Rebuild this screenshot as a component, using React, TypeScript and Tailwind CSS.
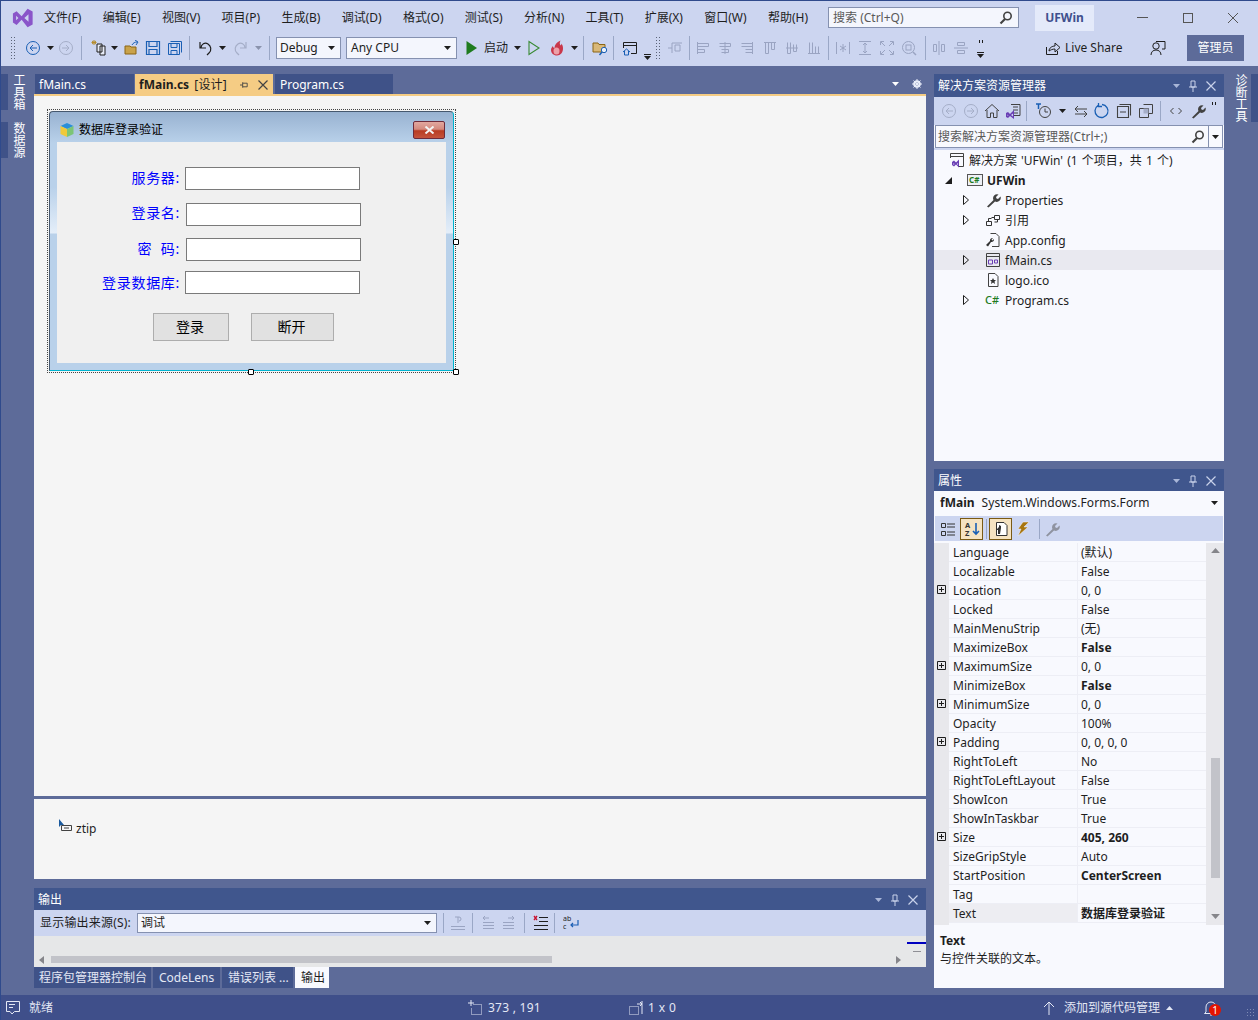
import type { ReactNode } from "react";

const MENUS = ["文件(F)", "编辑(E)", "视图(V)", "项目(P)", "生成(B)", "调试(D)", "格式(O)", "测试(S)", "分析(N)", "工具(T)", "扩展(X)", "窗口(W)", "帮助(H)"];

const PROPS = [
  { name: "Language", value: "(默认)" },
  { name: "Localizable", value: "False" },
  { name: "Location", value: "0, 0", plus: true },
  { name: "Locked", value: "False" },
  { name: "MainMenuStrip", value: "(无)" },
  { name: "MaximizeBox", value: "False", bold: true },
  { name: "MaximumSize", value: "0, 0", plus: true },
  { name: "MinimizeBox", value: "False", bold: true },
  { name: "MinimumSize", value: "0, 0", plus: true },
  { name: "Opacity", value: "100%" },
  { name: "Padding", value: "0, 0, 0, 0", plus: true },
  { name: "RightToLeft", value: "No" },
  { name: "RightToLeftLayout", value: "False" },
  { name: "ShowIcon", value: "True" },
  { name: "ShowInTaskbar", value: "True" },
  { name: "Size", value: "405, 260", bold: true, plus: true },
  { name: "SizeGripStyle", value: "Auto" },
  { name: "StartPosition", value: "CenterScreen", bold: true },
  { name: "Tag", value: "" },
  { name: "Text", value: "数据库登录验证", bold: true, selected: true },
];

const GRAY = "#9aa4c2";
const DARK = "#1e1e1e";
const BLUE = "#1a5fb4";

function Ico({ className = "", children }: { className?: string; children: ReactNode }) {
  return (
    <svg viewBox="0 0 16 16" fill="none" className={`w-4 h-4 shrink-0 ${className}`}>
      {children}
    </svg>
  );
}

function Caret({ className = "", color = DARK }: { className?: string; color?: string }) {
  return (
    <svg viewBox="0 0 7 4" className={`w-[7px] h-1 shrink-0 ${className}`}>
      <path d="M0 0h7L3.5 4z" fill={color} />
    </svg>
  );
}

function Sep({ className = "" }: { className?: string }) {
  return <div className={`w-px h-[24px] bg-[#9aa7c6] shrink-0 ${className}`} />;
}

function Grip({ className = "" }: { className?: string }) {
  return <div className={`h-[24px] shrink-0 bg-[radial-gradient(#5b6478_1px,transparent_1px)] bg-[length:3px_3px] ${className}`} />;
}

function NavIcon({ className = "", color, dir }: { className?: string; color: string; dir: "l" | "r" }) {
  return (
    <Ico className={className}>
      <circle cx="8" cy="8" r="6.5" stroke={color} />
      <path d={dir === "l" ? "M12 8H5M8 5 5 8l3 3" : "M4 8h7M8 5l3 3-3 3"} stroke={color} />
    </Ico>
  );
}

function Align({ className = "", d }: { className?: string; d: string }) {
  return (
    <Ico className={className}>
      <path d={d} stroke={GRAY} />
    </Ico>
  );
}

function Wrench({ className = "", color = DARK }: { className?: string; color?: string }) {
  return (
    <Ico className={className}>
      <path d="M2 14.500 8.500 8a4 4 0 0 1 5-5.500L11 5l.5 1.500L13 7l2.500-2.500A4 4 0 0 1 10 9.500L3.500 15.500z" fill={color} />
    </Ico>
  );
}

function Magnifier({ className = "" }: { className?: string }) {
  return (
    <svg viewBox="0 0 14 14" className={`w-[14px] h-[14px] shrink-0 ${className}`} fill="none">
      <circle cx="8.500" cy="5" r="3.700" stroke="#424242" strokeWidth="1.600" />
      <path d="M6 8 1.500 12.500" stroke="#424242" strokeWidth="2.200" />
    </svg>
  );
}

function PaneButtons() {
  return (
    <div className="flex items-center">
      <Caret color="#a9b6d8" />
      <svg viewBox="0 0 10 12" className="w-[10px] h-3 ml-[8px]" fill="none">
        <path d="M3 1h4v6H3zM1 7h8M5 7v5" stroke="#c9d2ea" />
      </svg>
      <svg viewBox="0 0 10 10" className="w-[10px] h-[10px] ml-[8px]" fill="none">
        <path d="M0.500 0.500l9 9M9.500 0.500l-9 9" stroke="#c9d2ea" strokeWidth="1.200" />
      </svg>
    </div>
  );
}

function TitleBar({ title, className = "" }: { title: string; className?: string }) {
  return (
    <div className={`flex items-center justify-between bg-[#40568d] text-white pl-1 pr-[8px] pt-px ${className}`}>
      <span>{title}</span>
      <PaneButtons />
    </div>
  );
}

function MainToolbar() {
  return (
    <div className="h-[27px] flex items-center pl-[9px] pr-[14px]">
      <Grip className="w-[6px]" />
      <NavIcon className="ml-[9px]" color={BLUE} dir="l" />
      <Caret className="ml-[6px]" />
      <NavIcon className="ml-1" color="#a5aec8" dir="r" />
      <Sep className="ml-[7px]" />
      <Ico className="ml-[9px]">
        <path d="M6 4h5v8H6z M9 6h5v9H9z" stroke={DARK} fill="#e8ecf7" />
        <path d="M3 0v5M0.500 2.500h5M1 1l4 3M5 1 1 4" stroke="#b58b2a" />
      </Ico>
      <Caret className="ml-1" />
      <Ico className="ml-[6px]">
        <path d="M1 6h5l1 1h5v7H1z" fill="#c9a24a" stroke="#8a6514" />
        <path d="M8 5c1-2 3-3 5-3M11 0l3 2-2 3" stroke="#1a5fb4" />
      </Ico>
      <Ico className="ml-[5px]">
        <path d="M1.500 1.500h13v13h-13zM4 1.500v5h8v-5M4 14.500v-5h8v5" stroke={BLUE} strokeWidth="1.200" />
      </Ico>
      <Ico className="ml-[6px]">
        <path d="M3.500 1.500h11v11M1.500 3.500h11v11h-11zM4 3.500v4h6v-4M4 14.500v-4h6v4" stroke={BLUE} />
      </Ico>
      <Sep className="ml-[6px]" />
      <Ico className="ml-[8px]">
        <path d="M3 8C3 4 7 2 10 4s4 6 1 9l-2 2M2 2v6h6" stroke={DARK} strokeWidth="1.200" />
      </Ico>
      <Caret className="ml-[5px]" />
      <Ico className="ml-[6px]">
        <path d="M13 8c0-4-4-6-7-4S2 10 5 13l2 2M14 2v6H8" stroke="#a5aec8" strokeWidth="1.200" />
      </Ico>
      <Caret className="ml-[7px]" color="#8a93ad" />
      <Sep className="ml-[7px]" />
      <div className="ml-[6px] w-[65px] h-[22px] bg-[#f4f6fd] border border-[#8591b0] flex items-center justify-between pl-[3px] pr-[5px] shrink-0">
        <span>Debug</span>
        <Caret />
      </div>
      <div className="ml-[5px] w-[111px] h-[22px] bg-[#f4f6fd] border border-[#8591b0] flex items-center justify-between pl-[4px] pr-[5px] shrink-0">
        <span>Any CPU</span>
        <Caret />
      </div>
      <Ico className="ml-[7px]">
        <path d="M2.500 1v14L13 8z" fill="#1e7b1e" />
      </Ico>
      <span className="ml-1 w-[25px] shrink-0">启动</span>
      <Caret className="ml-[5px]" />
      <Ico className="ml-[5px]">
        <path d="M3 1.500v13L13 8z" stroke="#388a34" strokeWidth="1.100" />
      </Ico>
      <Ico className="ml-[7px]">
        <path d="M8 15.500c-3.500 0-6-2.500-6-5.500 0-2 1-3 2-4 0 1 .5 2 1.500 2 0-3 2-6 6-7.500-1 2-1 3.500 0 5 .5-.5 1-1 1-2 1 1.500 1.500 3 1.500 5 0 4-2.500 7-6 7z" fill="#c9374a" />
        <ellipse cx="7.500" cy="11" rx="3" ry="3.500" fill="#eda0a8" />
      </Ico>
      <Caret className="ml-[6px]" />
      <Sep className="ml-[5px]" />
      <Ico className="ml-[8px]">
        <path d="M1 3h5l1 1.500h6V12H1z" fill="#d9b878" stroke="#8a6514" />
        <circle cx="12" cy="10" r="2.700" stroke={BLUE} fill="#e8f0fb" />
        <path d="M10 12l-2.500 3" stroke={BLUE} strokeWidth="1.400" />
      </Ico>
      <Sep className="ml-[5px]" />
      <Ico className="ml-[8px]">
        <path d="M1.500 8V2.500h13v11H9M1.500 5.500h13" stroke={DARK} />
        <path d="M1 12l3.500-3L8 12M2.500 11v4h4v-4" stroke={BLUE} />
      </Ico>
      <div className="ml-[6px] w-[7px] flex flex-col items-center self-end mb-[1px] shrink-0">
        <div className="w-[7px] h-px bg-[#1e1e1e] mb-px" />
        <Caret />
      </div>
      <Grip className="ml-1 w-[5px]" />
      <Align className="ml-[7px]" d="M1 8h4M5 3v10M5 3h10M8 5h5v6H8z" />
      <Sep className="ml-[6px]" />
      <Align className="ml-[5px]" d="M2.500 2v12M2.500 3.500h11v3h-11M2.500 9.500h7v3h-7" />
      <Align className="ml-[6px]" d="M8 2v12M2.500 3.500h11v3h-11M4.500 9.500h7v3h-7" />
      <Align className="ml-[6px]" d="M13.500 2v12M2.500 3.500h11v3h-11M6.500 9.500h7v3h-7" />
      <Align className="ml-[7px]" d="M2 2.500h12M3.500 2.500v11h3v-11M9.500 2.500v7h3v-7" />
      <Align className="ml-[6px]" d="M2 8h12M3.500 2.500v11h3v-11M9.500 4.500v7h3v-7" />
      <Align className="ml-[6px]" d="M2 13.500h12M3.500 2.500v11h3v-11M9.500 6.500v7h3v-7" />
      <Sep className="ml-[6px]" />
      <Align className="ml-[6px]" d="M1.500 2v12M14.500 2v12M8 4v8M5 6l6 4M11 6l-6 4" />
      <Align className="ml-[6px]" d="M2 1.500h12M2 14.500h12M8 3v10M6 5l2-2 2 2M6 11l2 2 2-2" />
      <Align className="ml-[6px]" d="M1.500 5V1.500H5M11 1.500h3.500V5M14.500 11v3.500H11M5 14.500H1.500V11M2 2l4 4M14 2l-4 4M14 14l-4-4M2 14l4-4" />
      <Ico className="ml-[6px]">
        <circle cx="7.500" cy="7.500" r="6" stroke={GRAY} />
        <rect x="5" y="5" width="5" height="5" stroke={GRAY} />
        <path d="M12 12l3 3" stroke={GRAY} strokeWidth="1.500" />
      </Ico>
      <Sep className="ml-[8px]" />
      <Align className="ml-[5px]" d="M8 1v14M2.500 4.500h3v7h-3zM10.500 4.500h3v7h-3z" />
      <Align className="ml-[6px]" d="M1 8h14M4.500 2.500h7v3h-7zM4.500 10.500h7v3h-7z" />
      <div className="ml-2 w-[7px] h-[24px] flex flex-col items-center justify-between py-[2px] shrink-0">
        <div className="flex gap-[2px] mt-[2px]">
          <div className="w-px h-[3px] bg-[#1e1e1e]" />
          <div className="w-px h-[3px] bg-[#1e1e1e]" />
        </div>
        <div className="flex flex-col items-center">
          <div className="w-[7px] h-px bg-[#1e1e1e] mb-px" />
          <Caret />
        </div>
      </div>
      <div className="flex-1" />
      <Ico>
        <path d="M1.500 7v7.500h11V11" stroke={DARK} />
        <path d="M4 11c0-3 3-5 6-5V3l5 4.500L10 12V9c-2.500 0-4.500 1-6 2z" stroke={DARK} />
      </Ico>
      <span className="ml-[4px] w-[60px] shrink-0 whitespace-nowrap">Live Share</span>
      <Ico className="ml-[25px]">
        <circle cx="6" cy="6" r="3.200" stroke={DARK} />
        <path d="M1 15c0-3 2-5 5-5s5 2 5 5M6 1.500h9V9h-3" stroke={DARK} />
      </Ico>
      <div className="ml-[21px] w-[57px] h-[26px] bg-[#5d6b99] text-white flex items-center justify-center shrink-0">管理员</div>
    </div>
  );
}

function MenuBar() {
  return (
    <div className="h-[33px] flex items-center pl-[11px] pr-[16px]">
      <svg viewBox="0 0 24 24" className="w-[22px] h-[22px] shrink-0">
        <path fillRule="evenodd" d="M1 7l4-2.500 5.500 5.500L17 2l5.500 3v14L17 22l-6.500-8L5 19.500 1 17zM4.500 9.500v5L7 12zM13.500 12l4.500 4V8z" fill="#8a55c9" />
      </svg>
      <div className="flex gap-[21.3px] ml-[10px]">
        {MENUS.map((m) => (
          <span key={m} className="whitespace-nowrap">{m}</span>
        ))}
      </div>
      <div className="ml-[20px] w-[191px] h-[21px] bg-[#f4f6fd] border border-[#8591b0] flex items-center justify-between pl-1 pr-[5px] shrink-0">
        <span className="text-[#5a5a5a]">搜索 (Ctrl+Q)</span>
        <Magnifier />
      </div>
      <div className="ml-4 w-[59px] h-[26px] bg-[#e4eafa] text-[#40508d] font-bold flex items-center justify-center shrink-0">UFWin</div>
      <div className="flex-1" />
      <div className="flex items-center gap-[35px] pr-[4px]">
        <div className="w-[11px] h-px bg-[#555]" />
        <div className="w-[10px] h-[10px] border border-[#555]" />
        <svg viewBox="0 0 10 10" className="w-[10px] h-[10px]" fill="none">
          <path d="M0 0l10 10M10 0 0 10" stroke="#555" />
        </svg>
      </div>
    </div>
  );
}

function LeftRail() {
  return (
    <div className="w-[33px] flex flex-col gap-3 shrink-0">
      {["工具箱", "数据源"].map((t) => (
        <div key={t} className="flex gap-[3px] h-[36px]">
          <div className="w-[7px] bg-[#3f5288]" />
          <span className="[writing-mode:vertical-rl] text-white leading-[14px] w-[14px] whitespace-nowrap">{t}</span>
        </div>
      ))}
    </div>
  );
}

function RightRail() {
  return (
    <div className="w-[34px] pl-[9px] flex items-start shrink-0">
      <span className="[writing-mode:vertical-rl] text-white leading-[14px] w-[14px] whitespace-nowrap">诊断工具</span>
      <div className="ml-[4px] w-[7px] h-[48px] bg-[#3f5288] shrink-0" />
    </div>
  );
}

function Handle({ className }: { className: string }) {
  return <div className={`absolute w-[6px] h-[6px] bg-white border border-black rounded-[1px] ${className}`} />;
}

function DesignedForm() {
  const fields = [
    { label: "服务器:", input: "left-[128px] top-[25px]", text: "top-[24px]" },
    { label: "登录名:", input: "left-[129px] top-[61px]", text: "top-[59px]" },
    { label: "密  码:", input: "left-[129px] top-[96px]", text: "top-[95px]" },
    { label: "登录数据库:", input: "left-[128px] top-[129px]", text: "top-[129px]" },
  ];
  return (
    <div className="relative mt-[13px] ml-[13px] w-[409px] h-[264px] border border-dotted border-[#444]">
      <div className="absolute left-[1px] top-[1px] w-[405px] h-[260px] flex flex-col rounded-t-[4px] border border-[#46586e] border-r-[#00b4d0] border-b-[#00b4d0] bg-[linear-gradient(180deg,#98b2d1_0,#b9d1ea_31px,#b9d1ea_75px,#e4eef9_121px,#b9d1ea_122px)]">
        <div className="h-[30px] pt-[6px] flex items-center justify-between pl-[9px] pr-[8px] shrink-0">
          <div className="flex items-center">
            <svg viewBox="0 0 16 16" className="w-4 h-4">
              <path d="M8 1l6.500 3L8 7 1.500 4z" fill="#2a8fd8" />
              <path d="M1.500 4 8 7v8l-6.500-3z" fill="#f0c93a" />
              <path d="M14.500 4 8 7v8l6.500-3z" fill="#7cc576" />
            </svg>
            <span className="ml-[4px] text-black">数据库登录验证</span>
          </div>
          <div className="w-[32px] h-[18px] rounded-[2px] border border-[#6e2b3a] bg-[linear-gradient(180deg,#e2a8a0_0,#d48a7e_45%,#b83c22_55%,#c4533c_100%)] flex items-center justify-center">
            <svg viewBox="0 0 10 8" className="w-[11px] h-[8px]" fill="none">
              <path d="M1 0.500l8 7M9 0.500l-8 7" stroke="#f4f4f4" strokeWidth="2" />
            </svg>
          </div>
        </div>
        <div className="relative mx-[7px] w-[389px] h-[221px] bg-[#f0f0f0]">
          {fields.map((f) => (
            <div key={f.label}>
              <div className={`absolute right-[266px] h-[23px] flex items-center text-[14px] tracking-[0.7px] text-[#0000ff] whitespace-pre ${f.text}`}>{f.label}</div>
              <div className={`absolute w-[175px] h-[23px] bg-white border border-[#7a7a7a] ${f.input}`} />
            </div>
          ))}
          <div className="absolute left-[96px] top-[171px] w-[76px] h-[28px] pb-[2px] pr-[2px] bg-[#e1e1e1] border border-[#adadad] flex items-center justify-center text-[14px] text-black">登录</div>
          <div className="absolute left-[194px] top-[171px] w-[83px] h-[28px] pb-[2px] pr-[2px] bg-[#e1e1e1] border border-[#adadad] flex items-center justify-center text-[14px] text-black">断开</div>
        </div>
      </div>
      <Handle className="right-[-4px] top-[129px]" />
      <Handle className="left-[200px] bottom-[-3px]" />
      <Handle className="right-[-4px] bottom-[-3px]" />
    </div>
  );
}

function EditorArea() {
  return (
    <>
      <div className="h-[20px] flex items-stretch shrink-0">
        <div className="ml-px w-[99px] bg-[#3f5288] text-white flex items-center pl-1 pt-px">fMain.cs</div>
        <div className="ml-px w-[138px] bg-[#f5cc84] text-[#1e1e1e] flex items-center justify-between pl-1 pr-[5px] pt-px">
          <span><b>fMain.cs</b> <span className="ml-[2px] tracking-[0.2px]">[设计]</span></span>
          <div className="flex items-center gap-[9px]">
            <svg viewBox="0 0 10 8" className="w-[9px] h-[8px]" fill="none">
              <path d="M0 4h3M3 1v6M3 2h5v4H3M8 4" stroke="#444" />
            </svg>
            <svg viewBox="0 0 10 10" className="w-[10px] h-[10px]" fill="none">
              <path d="M0.500 0.500l9 9M9.500 0.500l-9 9" stroke="#444" strokeWidth="1.200" />
            </svg>
          </div>
        </div>
        <div className="ml-[2px] w-[118px] bg-[#3f5288] text-white flex items-center pl-[5px] pt-px">Program.cs</div>
        <div className="flex-1 flex items-center justify-end pr-1">
          <Caret color="#fff" />
          <svg viewBox="0 0 10 10" className="w-[10px] h-[10px] ml-[13px]">
            <circle cx="5" cy="5" r="2.800" fill="none" stroke="#e8ecf8" strokeWidth="2" />
            <path d="M5 0v10M0 5h10M1.500 1.500l7 7M8.500 1.500l-7 7" stroke="#e8ecf8" strokeWidth="1" />
          </svg>
        </div>
      </div>
      <div className="h-[2px] bg-[#f5cc84] shrink-0" />
      <div className="h-[700px] bg-[#f5f5f5] shrink-0 overflow-hidden">
        <DesignedForm />
      </div>
      <div className="h-[3px] bg-[#5d6b99] shrink-0" />
      <div className="h-[80px] bg-[#f5f5f5] shrink-0 pl-[25px] pt-[20px] flex items-start">
        <svg viewBox="0 0 14 14" className="w-[14px] h-[14px] shrink-0" fill="none">
          <path d="M2.500 6.500h10v5h-10zM5 9h5" stroke="#424242" />
          <path d="M0 0v8l2-2 3 0z" fill="#1a5a9e" />
        </svg>
        <span className="ml-[3px] mt-[1px] leading-[18px]">ztip</span>
      </div>
      <div className="h-[9px] shrink-0" />
      <TitleBar title="输出" className="h-[22px] shrink-0" />
      <div className="h-[26px] bg-[#ccd5f0] flex items-center pl-[6px] shrink-0">
        <span className="w-[94px] tracking-[0.2px] whitespace-nowrap shrink-0">显示输出来源(S):</span>
        <div className="ml-[3px] w-[300px] h-[20px] bg-[#f4f6fd] border border-[#8591b0] flex items-center justify-between pl-[3px] pr-[5px] shrink-0">
          <span>调试</span>
          <Caret />
        </div>
        <Sep className="ml-[6px] !h-[20px]" />
        <Align className="ml-[6px]" d="M1 14.500h14M1 11.500h14M8 2v6M5 2h4a2 2 0 0 1 0 4" />
        <Sep className="ml-[6px] !h-[20px]" />
        <Align className="ml-[7px]" d="M3 10.500h11M3 13.500h11M3 7.500h11M9 3H3M5 1 3 3l2 2" />
        <Align className="ml-[5px]" d="M2 10.500h11M2 13.500h11M2 7.500h11M7 3h6M11 1l2 2-2 2" />
        <Sep className="ml-[7px] !h-[20px]" />
        <Ico className="ml-[8px]">
          <path d="M6 2.500h9M6 6.500h9M1 10.500h14M1 14.500h14" stroke={DARK} />
          <path d="M1 1l3 4M4 1 1 5" stroke="#c8102e" strokeWidth="1.300" />
        </Ico>
        <Sep className="ml-[5px] !h-[20px]" />
        <Ico className="ml-[8px]">
          <path d="M15 5v5H8M10 8l-2 2 2 2" stroke={BLUE} strokeWidth="1.200" />
          <text x="0" y="6" fontSize="7" fill={DARK}>ab</text>
          <text x="0" y="14" fontSize="7" fill={DARK}>c</text>
        </Ico>
      </div>
      <div className="h-[31px] bg-[#e6e7e8] flex flex-col shrink-0 pl-[5px]">
        <div className="flex-1 flex flex-col items-end">
          <div className="w-[19px] h-[2px] mt-[6px] bg-[#0000c0]" />
          <div className="w-[8px] h-px mt-[7px] mr-[5px] bg-[#8f8f95]" />
        </div>
        <div className="h-[7px] flex items-center mb-[4px]">
          <svg viewBox="0 0 5 8" className="w-[5px] h-2 shrink-0">
            <path d="M5 0v8L0 4z" fill="#85858a" />
          </svg>
          <div className="ml-[7px] w-[501px] h-[7px] bg-[#c2c3c9] shrink-0" />
          <div className="flex-1" />
          <svg viewBox="0 0 5 8" className="w-[5px] h-2 shrink-0 mr-[25px]">
            <path d="M0 0v8l5-4z" fill="#85858a" />
          </svg>
        </div>
      </div>
      <div className="h-[21px] flex items-stretch shrink-0">
        <div className="w-[117px] bg-[#3f5288] text-[#e4e8f5] flex items-center pl-[5px] whitespace-nowrap">程序包管理器控制台</div>
        <div className="ml-[2px] w-[67px] bg-[#3f5288] text-[#e4e8f5] flex items-center pl-[6px]">CodeLens</div>
        <div className="ml-[2px] w-[71px] bg-[#3f5288] text-[#e4e8f5] flex items-center pl-[6px] whitespace-nowrap">错误列表 ...</div>
        <div className="ml-[2px] w-[34px] bg-[#f8f9fe] text-[#1e1e1e] flex items-center pl-[6px]">输出</div>
      </div>
    </>
  );
}

function TreeRow({ arrow, icon, label, highlight, bold, level }: { arrow?: "open" | "closed"; icon: ReactNode; label: string; highlight?: boolean; bold?: boolean; level: 0 | 1 | 2 }) {
  const arrowPad = level === 2 ? "w-[51px] pl-[29px]" : level === 1 ? "w-[33px] pl-[11px]" : "w-[15px]";
  return (
    <div className={`h-5 flex items-center ${highlight ? "bg-[#e9e9f0]" : ""}`}>
      <div className={`flex items-center shrink-0 ${arrowPad}`}>
        {arrow === "closed" && (
          <svg viewBox="0 0 6 10" className="w-[6px] h-[10px]" fill="none">
            <path d="M0.500 0.500v9L5.500 5z" stroke="#1e1e1e" />
          </svg>
        )}
        {arrow === "open" && (
          <svg viewBox="0 0 7 7" className="w-[7px] h-[7px]">
            <path d="M7 0v7H0z" fill="#1e1e1e" />
          </svg>
        )}
      </div>
      {icon}
      <span className={`ml-[4px] pt-[2px] whitespace-nowrap [word-spacing:1px] ${bold ? "font-bold" : ""}`}>{label}</span>
    </div>
  );
}

function SolutionExplorer() {
  return (
    <div className="h-[387px] flex flex-col bg-[#f8f9fe] shrink-0">
      <TitleBar title="解决方案资源管理器" className="h-[23px] shrink-0" />
      <div className="h-[28px] bg-[#ccd5f0] flex items-center pl-[7px] shrink-0">
        <NavIcon color="#a5aec8" dir="l" />
        <NavIcon className="ml-[6px]" color="#a5aec8" dir="r" />
        <Ico className="ml-[5px]">
          <path d="M1 8l7-6.500L15 8M3 7v7.500h3.500V10h3v4.500H13V7" stroke="#424242" />
        </Ico>
        <Ico className="ml-[5px]">
          <path d="M6 1.500h9v11H9M8 4h5M8 7h5M8 10h5" stroke="#424242" />
          <path fillRule="evenodd" d="M1 10l2-1 2 2 4-4 0 9-4-3-2 2-2-1zM2.500 11.500v1.500l1-.8zM6 12l2 1.500v-3z" fill="#6a3fb5" />
        </Ico>
        <Sep className="ml-[5px] !h-[20px]" />
        <Ico className="ml-[9px]">
          <circle cx="9" cy="9" r="5.500" stroke="#424242" />
          <path d="M9 5.500V9h3" stroke="#424242" />
          <path d="M0 1h5M2.500 1v5" stroke={BLUE} strokeWidth="1.500" />
        </Ico>
        <Caret className="ml-[7px]" />
        <Ico className="ml-[7px]">
          <path d="M2 6h12M5 3 2 6l3 3M14 11H2M11 8l3 3-3 3" stroke="#424242" />
        </Ico>
        <Ico className="ml-[5px]">
          <path d="M4 2.500A6.500 6.500 0 1 0 8 1.500M4.500 0v3.500H8" stroke={BLUE} strokeWidth="1.300" />
        </Ico>
        <Ico className="ml-[6px]">
          <path d="M3.500 1.500h11v11M1.500 3.500h11v11h-11zM4 9h6" stroke="#424242" strokeWidth="1.100" />
        </Ico>
        <Ico className="ml-[6px]">
          <path d="M5.500 1.500h9v9h-4M1.500 5.500h9v9h-9z" stroke="#424242" />
          <rect x="5.500" y="5.500" width="5" height="5" fill="#a5aec8" />
        </Ico>
        <Sep className="ml-[6px] !h-[20px]" />
        <Ico className="ml-[7px]">
          <path d="M5.500 5 2.500 8l3 3M10.500 5l3 3-3 3" stroke="#424242" />
        </Ico>
        <Wrench className="ml-[6px]" color="#424242" />
        <div className="ml-[6px] self-start mt-[5px] flex gap-[2px]">
          <div className="w-px h-[3px] bg-[#1e1e1e]" />
          <div className="w-px h-[3px] bg-[#1e1e1e]" />
        </div>
      </div>
      <div className="h-[23px] mx-px bg-[#f8f9fe] border border-[#8591b0] flex items-center shrink-0">
        <span className="pl-[2px] flex-1 text-[#5a5a5a] whitespace-nowrap">搜索解决方案资源管理器(Ctrl+;)</span>
        <Magnifier className="mr-[1px]" />
        <div className="ml-[2px] w-px h-full bg-[#8591b0]" />
        <Caret className="mx-[3px]" />
      </div>
      <div className="h-[2px] bg-[#ccd5f0] shrink-0" />
      <TreeRow
        level={0}
        icon={
          <Ico>
            <path d="M1.500 6V1.500h13v13H9M1.500 4.500h13" stroke="#424242" />
            <path fillRule="evenodd" d="M3 10l2-1.500 2 2 3-3v8l-3-3-2 2-2-1.500zM4.500 11v2l1-1zM8 12l1 1v-2z" fill="#6a3fb5" />
          </Ico>
        }
        label="解决方案 'UFWin' (1 个项目，共 1 个)"
      />
      <TreeRow
        level={1}
        arrow="open"
        bold
        icon={
          <svg viewBox="0 0 16 12" className="w-[16px] h-[12px] shrink-0">
            <rect x="0.500" y="0.500" width="15" height="11" fill="#eef0f5" stroke="#555" />
            <text x="2" y="9" fontSize="8" fontWeight="700" fill="#1e7b1e">C#</text>
          </svg>
        }
        label="UFWin"
      />
      <TreeRow level={2} arrow="closed" icon={<Wrench color="#424242" />} label="Properties" />
      <TreeRow
        level={2}
        arrow="closed"
        icon={
          <Ico>
            <path d="M1.500 9.500h5v4h-5zM9.500 3.500h5v4h-5zM3.500 9.500V6.500h3M6.500 5.500h3M9.500 10h3V7.500" stroke="#333" />
          </Ico>
        }
        label="引用"
      />
      <TreeRow
        level={2}
        icon={
          <Ico>
            <path d="M5.500 1.500H11l3 3v10H7" stroke="#424242" />
            <path d="M1 13l4-4a2.500 2.500 0 0 1 3-3L6.500 7.500l1 1L9 7a2.500 2.500 0 0 1-3 3l-3 4.500z" fill="#333" />
          </Ico>
        }
        label="App.config"
      />
      <TreeRow
        level={2}
        arrow="closed"
        highlight
        icon={
          <Ico>
            <path d="M1.500 1.500h13v13h-13zM1.500 4.500h13" stroke="#424242" />
            <path d="M3.500 8h4v4h-4zM9.500 8h3v3h-3z" stroke="#6a3fb5" />
          </Ico>
        }
        label="fMain.cs"
      />
      <TreeRow
        level={2}
        icon={
          <Ico>
            <path d="M3.500 1.500H10l3 3v10H3.500z" stroke="#424242" />
            <path d="M8 6l1 2h2l-1.500 1.500L10 12 8 10.500 6 12l.5-2.500L5 8h2z" fill="#333" />
          </Ico>
        }
        label="logo.ico"
      />
      <TreeRow
        level={2}
        arrow="closed"
        icon={
          <svg viewBox="0 0 16 16" className="w-4 h-4 shrink-0">
            <text x="0" y="12" fontSize="11" fontWeight="500" fill="#1e7b1e">C#</text>
          </svg>
        }
        label="Program.cs"
      />
    </div>
  );
}

function PlusBox() {
  return (
    <svg viewBox="0 0 9 9" className="w-[9px] h-[9px] mb-[2px]" fill="none">
      <path d="M0.500 0.500h8v8h-8zM2 4.500h5M4.500 2v5" stroke="#1e1e1e" />
    </svg>
  );
}

function Properties() {
  return (
    <div className="h-[519px] flex flex-col bg-[#f8f9fe] shrink-0">
      <TitleBar title="属性" className="h-[22px] shrink-0" />
      <div className="h-[25px] flex items-center pl-[6px] pr-[6px] pb-[2px] shrink-0">
        <b>fMain</b>
        <span className="ml-[7px] flex-1 tracking-[0.08px] whitespace-nowrap">System.Windows.Forms.Form</span>
        <Caret />
      </div>
      <div className="h-[25px] mx-px bg-[#ccd5f0] flex items-center pl-[5px] shrink-0">
        <Ico>
          <path d="M1.500 2.500h4v4h-4zM1.500 10.500h4v4h-4zM7 3h8M7 6h8M7 11h8M7 14h8" stroke="#333" />
        </Ico>
        <div className="ml-[4px] w-[23px] h-[22px] bg-[#f5e3c2] border border-[#7a5a14] flex items-center justify-center">
          <Ico>
            <text x="1" y="7" fontSize="7.500" fontWeight="700" fill="#333">A</text>
            <text x="1" y="15" fontSize="7.500" fontWeight="700" fill="#333">Z</text>
            <path d="M12 2v11M9 10l3 3 3-3" stroke={BLUE} strokeWidth="1.600" />
          </Ico>
        </div>
        <div className="ml-[3px] w-px h-[20px] bg-[#9aa7c6]" />
        <div className="ml-[2px] w-[23px] h-[22px] bg-[#f5e3c2] border border-[#7a5a14] flex items-center justify-center">
          <Ico>
            <path d="M3.500 1.500H11l3 3v10H3.500z" stroke="#333" fill="#fff" />
            <path d="M3 9l3-3V4l2 1v2l-1 6H5V9z" fill="#333" />
          </Ico>
        </div>
        <Ico className="ml-[3px]">
          <path d="M8 1h6L9 6h4L3 15l3-7H3z" fill="#a8750f" stroke="#f4f6fd" strokeWidth="0.500" />
        </Ico>
        <div className="ml-[8px] w-px h-[20px] bg-[#9aa7c6]" />
        <Wrench className="ml-[4px]" color="#8f93a0" />
      </div>
      <div className="h-[2px] shrink-0" />
      <div className="h-[382px] flex bg-[#e8e8ec] shrink-0 overflow-hidden">
        <div className="w-[272px] shrink-0">
          {PROPS.map((p) => (
            <div key={p.name} className="h-[19px] flex">
              <div className="w-[15px] flex items-center justify-center shrink-0">{p.plus && <PlusBox />}</div>
              <div className={`w-[128px] pl-1 pt-px flex items-center border-b border-[#edeef5] shrink-0 whitespace-nowrap ${p.selected ? "bg-[#ededf2]" : "bg-[#f8f9fe]"}`}>{p.name}</div>
              <div className="w-px bg-[#edeef5] shrink-0" />
              <div className={`w-[128px] pl-[3px] pt-px flex items-center border-b border-[#edeef5] bg-[#f8f9fe] text-[#1e1e1e] shrink-0 whitespace-nowrap ${p.bold ? "font-bold" : ""}`}>{p.value}</div>
            </div>
          ))}
          <div className="h-[2px] ml-[15px] bg-[#f8f9fe]" />
        </div>
        <div className="w-[18px] flex flex-col items-center pt-[5px]">
          <Caret className="rotate-180 !w-[9px] !h-[5px]" color="#85858a" />
          <div className="h-[205px]" />
          <div className="w-[9px] h-[120px] bg-[#c2c3c9]" />
          <div className="h-[36px]" />
          <Caret className="!w-[9px] !h-[5px]" color="#85858a" />
        </div>
      </div>
      <div className="pl-[6px] pt-[7px]">
        <div className="font-bold leading-[18px]">Text</div>
        <div className="leading-[18px]">与控件关联的文本。</div>
      </div>
    </div>
  );
}

function StatusBar() {
  return (
    <div className="h-[25px] bg-[#3f4f8a] text-[#e4e8f5] flex items-center pl-1 shrink-0 relative">
      <Ico>
        <path d="M1.500 1.500h13v10h-5L7 14l-2-2.500H1.500zM4 4.500h6M4 7.500h4" stroke="#e4e8f5" />
      </Ico>
      <span className="ml-[8px] w-[24px] shrink-0">就绪</span>
      <Ico className="ml-[414px]">
        <path d="M4 0v6M1 3h6" stroke="#e4e8f5" />
        <path d="M6.500 4.500h8v10h-10V8" stroke="#e4e8f5" strokeDasharray="1 1" />
      </Ico>
      <span className="ml-[5px] w-[52px] tracking-[0.25px] shrink-0 whitespace-nowrap">373 , 191</span>
      <Ico className="ml-[88px]">
        <path d="M1.500 6.500h9v8h-9z" stroke="#e4e8f5" strokeDasharray="1 1" />
        <path d="M9 4h5M12 2l2 2-2 2M14 1v13" stroke="#e4e8f5" />
      </Ico>
      <span className="ml-[4px] w-[28px] tracking-[0.4px] shrink-0 whitespace-nowrap">1 x 0</span>
      <Ico className="ml-[365px]">
        <path d="M8 15V2M3 7l5-5 5 5" stroke="#e4e8f5" />
      </Ico>
      <span className="ml-[7px] w-[96px] shrink-0 whitespace-nowrap">添加到源代码管理</span>
      <Caret className="ml-[6px] rotate-180" color="#e4e8f5" />
      <div className="relative ml-[30px] w-4 h-4 shrink-0">
        <Ico>
          <path d="M3 12V7a5 5 0 0 1 10 0v5l1.500 1.500h-13zM7 15h2" stroke="#e4e8f5" />
        </Ico>
        <div className="absolute left-[6px] top-[4px] w-[12px] h-[12px] rounded-full bg-[#e51400] text-white text-[10px] leading-[12px] text-center">1</div>
      </div>
      <div className="ml-[27px] w-[9px] h-[9px] self-end mb-[3px] bg-[radial-gradient(#7f8bb5_1px,transparent_1px)] bg-[length:3px_3px]" />
    </div>
  );
}

export default function App() {
  return (
    <div className="w-[1258px] h-[1020px] flex flex-col bg-[#5d6b99] border-l border-t border-[#2f4a8c] overflow-hidden font-['Noto_Sans','Noto_Sans_CJK_SC',sans-serif] text-[12px] text-[#1e1e1e]">
      <div className="h-[65px] bg-[#ccd5f0] shrink-0">
        <MenuBar />
        <MainToolbar />
      </div>
      <div className="h-[929px] pt-2 flex shrink-0">
        <LeftRail />
        <div className="w-[892px] flex flex-col shrink-0">
          <EditorArea />
        </div>
        <div className="ml-2 w-[290px] flex flex-col shrink-0">
          <SolutionExplorer />
          <div className="h-2 shrink-0" />
          <Properties />
        </div>
        <RightRail />
      </div>
      <StatusBar />
    </div>
  );
}
